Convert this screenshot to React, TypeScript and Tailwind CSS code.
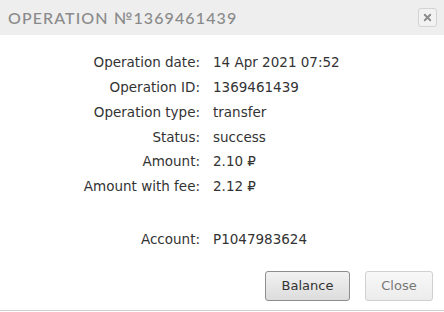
import { X } from "lucide-react";

const rows = [
  { label: "Operation date:", value: "14 Apr 2021 07:52" },
  { label: "Operation ID:", value: "1369461439" },
  { label: "Operation type:", value: "transfer" },
  { label: "Status:", value: "success" },
  { label: "Amount:", value: "2.10 ₽" },
  { label: "Amount with fee:", value: "2.12 ₽" },
];

export default function App() {
  return (
    <div className="w-[444px] h-[312px] bg-white flex flex-col overflow-hidden">
      <div className="h-[35px] bg-[#eeeeee] flex items-center justify-between pl-[8px] pr-[7px]">
        <span className="font-['Lato',sans-serif] text-[16px] tracking-[1.1px] text-[#8a8a8a] font-medium">
          OPERATION №1369461439
        </span>
        <button className="w-[19px] h-[19px] rounded-[3px] border border-[#d3d3d3] bg-[#f2f2f2] flex items-center justify-center">
          <X size={11} strokeWidth={4} className="text-[#8a8a8a]" />
        </button>
      </div>

      <div className="flex-1 flex flex-col pt-[15px] font-['DejaVu_Sans',sans-serif] text-[13.5px] text-[#333]">
        {rows.map((r) => (
          <div key={r.label} className="flex h-[24.8px] items-center">
            <span className="w-[200px] text-right">{r.label}</span>
            <span className="pl-[13px]">{r.value}</span>
          </div>
        ))}
        <div className="flex h-[24px] items-center mt-[28px]">
          <span className="w-[200px] text-right">Account:</span>
          <span className="pl-[13px]">P1047983624</span>
        </div>

        <div className="flex justify-end gap-[15px] pr-[11px] mt-auto mb-[9px] text-[13px]">
          <button className="w-[85px] h-[30px] rounded-[3px] border border-[#8e8e8e] bg-gradient-to-b from-[#f2f2f2] to-[#dcdcdc] text-[#333]">
            Balance
          </button>
          <button className="w-[68px] h-[30px] rounded-[3px] border border-[#d0d0d0] bg-gradient-to-b from-[#f8f8f8] to-[#ececec] text-[#777]">
            Close
          </button>
        </div>
      </div>
      <div className="h-[1px] bg-[#cfcfcf] mb-[1px]" />
    </div>
  );
}
